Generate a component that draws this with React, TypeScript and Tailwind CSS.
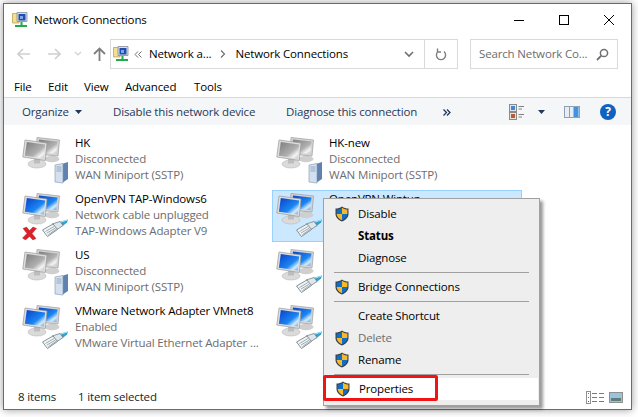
import React from 'react'

type IconProps = { active?: boolean; badge?: 'server' | 'cable'; unplugged?: boolean }

function Monitors({ active, id }: { active?: boolean; id: string }) {
    return (
        <>
            <defs>
                <linearGradient id={id} x1="0" y1="0" x2="1" y2="1">
                    <stop offset="0" stopColor={active ? '#0a3fc8' : '#7c7c7c'} />
                    <stop offset="0.6" stopColor={active ? '#1c86f2' : '#b0b0b0'} />
                    <stop offset="0.8" stopColor={active ? '#d4ecff' : '#f4f4f4'} />
                    <stop offset="1" stopColor={active ? '#3b9cf5' : '#bdbdbd'} />
                </linearGradient>
            </defs>
            {/* back monitor */}
            <ellipse cx="30" cy="23" rx="7.5" ry="3.2" fill="#cfcfcf" />
            <path d="M15 1.5 L37.5 4 L36 20 L14 18 Z" fill="#d4d4d4" stroke="#9c9c9c" strokeWidth="0.7" />
            <path d="M17 3.5 L35.5 5.5 L34.3 18 L16 16.2 Z" fill={`url(#${id})`} />
            {/* front monitor */}
            <ellipse cx="15" cy="28" rx="9" ry="4" fill="#dadada" stroke="#b8b8b8" strokeWidth="0.6" />
            <rect x="12" y="23" width="6" height="4.5" fill="#bdbdbd" />
            <path d="M3 4 L25 7 L23.3 24.5 L0.8 21 Z" fill="#dedede" stroke="#989898" strokeWidth="0.7" />
            <path d="M4.8 6 L23.2 8.6 L21.8 22.6 L2.9 19.8 Z" fill={`url(#${id})`} />
        </>
    )
}

function Cable() {
    return (
        <g>
            <path d="M37 30 L46 27.5 L45 30.5 L40 34.5 Z" fill="#2f9fd0" />
            <path d="M38 30.5 L45.5 28" stroke="#a8e4f5" strokeWidth="1" />
            <path d="M30 32 L38 29.5 L41 33.5 L35 37.5 Z" fill="#dfe6ea" stroke="#76838b" strokeWidth="0.8" />
            <path d="M20.5 38 L31 32 L35.5 37.5 L25.5 44.5 Z" fill="#f2f5f6" stroke="#76838b" strokeWidth="0.9" />
            <path d="M23.5 39.5 L32 34.5 M25 41 L33.5 36 M26.5 42.5 L34.5 37" stroke="#8c989f" strokeWidth="0.8" />
        </g>
    )
}

function Server() {
    return (
        <g>
            <path d="M40 28 L46 26 L46 43 L40 47 Z" fill="#5f83ae" />
            <path d="M33 29 L41 27.5 L41 47 L33 46 Z" fill="#d3e0ef" stroke="#7c93ae" strokeWidth="0.6" />
            <path d="M34.5 31 H39.5 M34.5 33 H39.5 M34.5 35 H39.5" stroke="#7c93ae" strokeWidth="0.7" />
        </g>
    )
}

function RedX() {
    return (
        <path d="M1 36.5 L4.5 35 L7.5 38.5 L11 35 L14.5 36.5 L10 41.5 L14 46.5 L11 48 L7.5 44.5 L3.5 48 L0.5 46 L5 41.5 Z" fill="#dc2228" stroke="#a51418" strokeWidth="0.4" />
    )
}

function NetIcon({ active, badge, unplugged, id }: IconProps & { id: string }) {
    return (
        <svg width="48" height="48" viewBox="0 0 48 48" className="shrink-0">
            <Monitors active={active} id={id} />
            {badge === 'server' ? <Server /> : <Cable />}
            {unplugged && <RedX />}
        </svg>
    )
}

function SmallNet() {
    return (
        <svg width="16" height="16" viewBox="0 0 16 16" className="shrink-0">
            <path d="M0.5 1.5 H7 V11 H0.5 Z" fill="#f3df92" stroke="#b89a3c" strokeWidth="0.7" />
            <path d="M5 0.5 H15 V9.5 H5 Z" fill="#d8dde6" stroke="#77808e" strokeWidth="0.7" />
            <path d="M6.5 2 H13.5 V8.5 H6.5 Z" fill="#1c4fb0" />
            <path d="M8 4 H11 V7 H8 Z" fill="#7ea6e8" />
            <path d="M8.5 10 H10.5 V13 H8.5 Z" fill="#27a84a" />
            <path d="M3 13 H15 V15 H3 Z" fill="#27a84a" />
        </svg>
    )
}

function Shield() {
    return (
        <svg width="14" height="16" viewBox="0 0 14 16" className="shrink-0">
            <path d="M7 0.5 C9 2 11 2.6 13.5 2.6 V8 C13.5 11.5 10.5 14 7 15.5 C3.5 14 0.5 11.5 0.5 8 V2.6 C3 2.6 5 2 7 0.5 Z" fill="#3a3f46" />
            <path d="M7 1.8 V8 H1.6 V3.6 C3.5 3.5 5.4 3 7 1.8 Z" fill="#0f6fc6" />
            <path d="M7 1.8 C8.6 3 10.5 3.5 12.4 3.6 V8 H7 Z" fill="#f6b92b" />
            <path d="M1.6 8 H7 V14.2 C4.2 13 1.8 11 1.6 8 Z" fill="#f6b92b" />
            <path d="M7 8 H12.4 C12.2 11 9.8 13 7 14.2 Z" fill="#0f6fc6" />
        </svg>
    )
}

// rows 3 and 4 of the right column sit behind the context menu, only their icons show
const connections = [
    { name: 'HK', status: 'Disconnected', device: 'WAN Miniport (SSTP)', badge: 'server' as const },
    { name: 'HK-new', status: 'Disconnected', device: 'WAN Miniport (SSTP)', badge: 'server' as const },
    { name: 'OpenVPN TAP-Windows6', status: 'Network cable unplugged', device: 'TAP-Windows Adapter V9', active: true, unplugged: true },
    { name: 'OpenVPN Wintun', active: true, selected: true },
    { name: 'US', status: 'Disconnected', device: 'WAN Miniport (SSTP)', badge: 'server' as const },
    { active: true },
    { name: 'VMware Network Adapter VMnet8', status: 'Enabled', device: 'VMware Virtual Ethernet Adapter ...', active: true },
    { active: true },
]

function ContextMenu() {
    const Row = ({ label, shield, bold, muted }: { label: string; shield?: boolean; bold?: boolean; muted?: boolean }) => (
        <div className={`flex h-[22px] items-center ${bold ? 'font-bold' : ''} ${muted ? 'text-[#6d6d6d]' : 'text-black'}`}>
            <div className="flex w-[34px] justify-center pl-px">{shield && <Shield />}</div>
            <span>{label}</span>
        </div>
    )
    const Sep = () => <div className="mx-[10px] my-[3px] h-px bg-[#a0a0a0]" />
    return (
        <div className="absolute left-[319px] top-[194px] h-[208px] w-[217px] border border-[#a0a0a0] bg-[#eeeeee] pt-[4px] shadow-[3px_3px_3px_rgba(0,0,0,0.4)]">
            <Row label="Disable" shield />
            <Row label="Status" bold />
            <Row label="Diagnose" />
            <Sep />
            <Row label="Bridge Connections" shield />
            <Sep />
            <Row label="Create Shortcut" />
            <Row label="Delete" shield muted />
            <Row label="Rename" shield />
            <Sep />
            <div className="relative mx-px bg-white">
                <Row label="Properties" shield />
                <div className="absolute left-[-2px] top-[-3px] h-[26px] w-[115px] rounded-[2px] border-[3px] border-[#f01414]" />
            </div>
        </div>
    )
}

export default function App() {
    return (
        <div className="h-[417px] w-[638px] overflow-hidden bg-white pl-[3px] pt-[3px] text-[11.5px] tracking-[-0.15px] text-black [font-family:'Open_Sans','Noto_Sans',sans-serif]">
            <div className="relative flex h-[407px] w-[629px] flex-col border border-[#6b6b6b] bg-white shadow-[0_0_8px_rgba(0,0,0,0.4)]">
                {/* Title bar */}
                <div className="flex h-[32px] items-center pl-[8px]">
                    <SmallNet />
                    <span className="ml-[6px]">Network Connections</span>
                    <div className="ml-auto flex items-center gap-[35px] pr-[17px]">
                        <div className="h-px w-[10px] bg-black" />
                        <div className="h-[10px] w-[10px] border border-black" />
                        <svg width="10" height="10" viewBox="0 0 10 10"><path d="M0 0 L10 10 M10 0 L0 10" stroke="#000" strokeWidth="1" /></svg>
                    </div>
                </div>

                {/* Address row */}
                <div className="mt-[3px] flex h-[30px] items-center">
                    <div className="flex w-[106px] items-center pl-[13px]">
                        <svg width="14" height="12" viewBox="0 0 14 12"><path d="M1 6 H13 M6 1 L1 6 L6 11" fill="none" stroke="#cfcfcf" strokeWidth="1.6" /></svg>
                        <svg width="14" height="12" viewBox="0 0 14 12" className="ml-[16px]"><path d="M1 6 H13 M8 1 L13 6 L8 11" fill="none" stroke="#cfcfcf" strokeWidth="1.6" /></svg>
                        <svg width="8" height="6" viewBox="0 0 8 6" className="ml-[13px]"><path d="M1 1 L4 4 L7 1" fill="none" stroke="#d0d0d0" strokeWidth="1.2" /></svg>
                        <svg width="13" height="14" viewBox="0 0 13 14" className="ml-[11px]"><path d="M6.5 14 V2 M1 7 L6.5 1.5 L12 7" fill="none" stroke="#7f7f7f" strokeWidth="1.8" /></svg>
                    </div>
                    <div className="flex h-full w-[348px] items-center border border-[#d9d9d9]">
                        <div className="ml-[2px]"><SmallNet /></div>
                        <svg width="8" height="7" viewBox="0 0 8 7" className="ml-[5px]"><path d="M4 0.5 L1 3.5 L4 6.5 M7.5 0.5 L4.5 3.5 L7.5 6.5" fill="none" stroke="#707070" /></svg>
                        <span className="ml-[7px]">Network a...</span>
                        <svg width="6" height="8" viewBox="0 0 6 8" className="ml-[9px]"><path d="M1 0.5 L4.5 4 L1 7.5" fill="none" stroke="#707070" strokeWidth="1.2" /></svg>
                        <span className="ml-[9px]">Network Connections</span>
                        <svg width="10" height="7" viewBox="0 0 10 7" className="ml-auto mr-[10px]"><path d="M1 1 L5 5 L9 1" fill="none" stroke="#707070" strokeWidth="1.6" /></svg>
                        <div className="flex h-full w-[33px] items-center justify-center border-l border-[#d9d9d9]">
                            <svg width="12" height="13" viewBox="0 0 12 13"><path d="M3 3.5 A4.6 4.6 0 1 0 9 3.5 M2.5 0.5 V4 H6" fill="none" stroke="#7f7f7f" strokeWidth="1.4" /></svg>
                        </div>
                    </div>
                    <div className="ml-[12px] flex h-full w-[148px] items-center justify-between border border-[#d9d9d9] px-[8px] text-[#6d6d6d]">
                        <span>Search Network Co...</span>
                        <svg width="13" height="13" viewBox="0 0 13 13"><circle cx="8" cy="5" r="3.6" fill="none" stroke="#707070" strokeWidth="1.5" /><path d="M5.3 7.7 L1 12" stroke="#707070" strokeWidth="1.8" /></svg>
                    </div>
                </div>

                {/* Menu */}
                <div className="mt-[6px] flex h-[22px] items-center pl-[10px] pt-px">
                    <span className="w-[34px]">File</span>
                    <span className="w-[36px]">Edit</span>
                    <span className="w-[41px]">View</span>
                    <span className="w-[69px]">Advanced</span>
                    <span>Tools</span>
                </div>

                {/* Toolbar */}
                <div className="flex h-[28px] items-center border-t border-[#d9d9d9] bg-[#f5f6f7] pl-[18px] pt-px text-[#1e395b]">
                    <span className="w-[48px]">Organize</span>
                    <svg width="7" height="4" viewBox="0 0 7 4" className="ml-[5px]"><path d="M0 0 H7 L3.5 4 Z" fill="#1e395b" /></svg>
                    <span className="ml-[31px] w-[143px] whitespace-nowrap">Disable this network device</span>
                    <span className="ml-[30px] w-[134px] whitespace-nowrap">Diagnose this connection</span>
                    <svg width="8" height="7" viewBox="0 0 8 7" className="ml-[23px]"><path d="M0.5 0.5 L3.5 3.5 L0.5 6.5 M4 0.5 L7 3.5 L4 6.5" fill="none" stroke="#1e395b" strokeWidth="1.3" /></svg>
                    <div className="ml-auto flex items-center pr-[15px]">
                        <svg width="16" height="16" viewBox="0 0 16 16">
                            <rect x="0.5" y="0.5" width="7" height="7" fill="#dce8f5" stroke="#8a8a8a" />
                            <rect x="2" y="2" width="4" height="4" fill="#4c86c6" />
                            <rect x="0.5" y="8.5" width="7" height="7" fill="#f0e2d0" stroke="#8a8a8a" />
                            <rect x="2" y="10" width="4" height="4" fill="#b35c3a" />
                            <path d="M9.5 2.5 H15 M9.5 5 H13 M9.5 10.5 H15 M9.5 13 H13" stroke="#7f7f7f" />
                        </svg>
                        <svg width="7" height="4" viewBox="0 0 7 4" className="ml-[13px]"><path d="M0 0 H7 L3.5 4 Z" fill="#1e395b" /></svg>
                        <svg width="16" height="12" viewBox="0 0 16 12" className="ml-[19px]">
                            <rect x="0.5" y="0.5" width="15" height="11" fill="#e8edf3" stroke="#8ea0b4" />
                            <rect x="9.5" y="1" width="5" height="10" fill="#3f93e0" />
                            <path d="M5.5 1 V11" stroke="#8ea0b4" />
                        </svg>
                        <div className="ml-[20px] flex h-[16px] w-[16px] items-center justify-center rounded-full bg-[#0f62c0] text-[12px] font-bold leading-none text-white">?</div>
                    </div>
                </div>

                {/* Connections */}
                <div className="grid flex-1 grid-cols-[250px_250px] content-start gap-[4px] pl-[14px] pt-[9px]">
                    {connections.map((c, i) => (
                        <div key={i} className={`flex h-[52px] items-center border pl-[3px] leading-[16px] ${c.selected ? 'border-[#99d1ff] bg-[#cce8ff]' : 'border-transparent'}`}>
                            <NetIcon active={c.active} badge={c.badge} unplugged={c.unplugged} id={`g${i}`} />
                            <div className={`ml-[5px] min-w-0 whitespace-nowrap ${c.selected ? 'self-start' : 'pb-[2px]'}`}>
                                <div>{c.name}</div>
                                <div className="text-[#6d6d6d]">{c.status}</div>
                                <div className="text-[#6d6d6d]">{c.device}</div>
                            </div>
                        </div>
                    ))}
                </div>

                {/* Status bar */}
                <div className="flex h-[24px] items-center pl-[14px] text-[#222222]">
                    <span className="w-[60px]">8 items</span>
                    <span>1 item selected</span>
                    <div className="ml-auto flex items-center pr-[8px]">
                        <svg width="20" height="13" viewBox="0 0 20 13">
                            <rect x="0.5" y="0.5" width="4" height="12" fill="#fff" stroke="#909090" />
                            <path d="M2 2.5 h1 M2 6.5 h1" stroke="#3c7fc4" strokeWidth="1.2" />
                            <path d="M2 10.5 h1" stroke="#d03030" strokeWidth="1.2" />
                            <path d="M6 2.5 h5 M13 2.5 h5 M6 6.5 h5 M13 6.5 h5 M6 10.5 h5 M13 10.5 h5" stroke="#7a7a7a" strokeWidth="1.2" />
                        </svg>
                        <svg width="14" height="11" viewBox="0 0 14 11" className="ml-[3px]">
                            <rect x="0.5" y="0.5" width="13" height="10" fill="#9cc2de" stroke="#909090" />
                            <rect x="2" y="6" width="10" height="3" fill="#5d7f77" />
                        </svg>
                    </div>
                </div>

                <ContextMenu />
            </div>
        </div>
    )
}
